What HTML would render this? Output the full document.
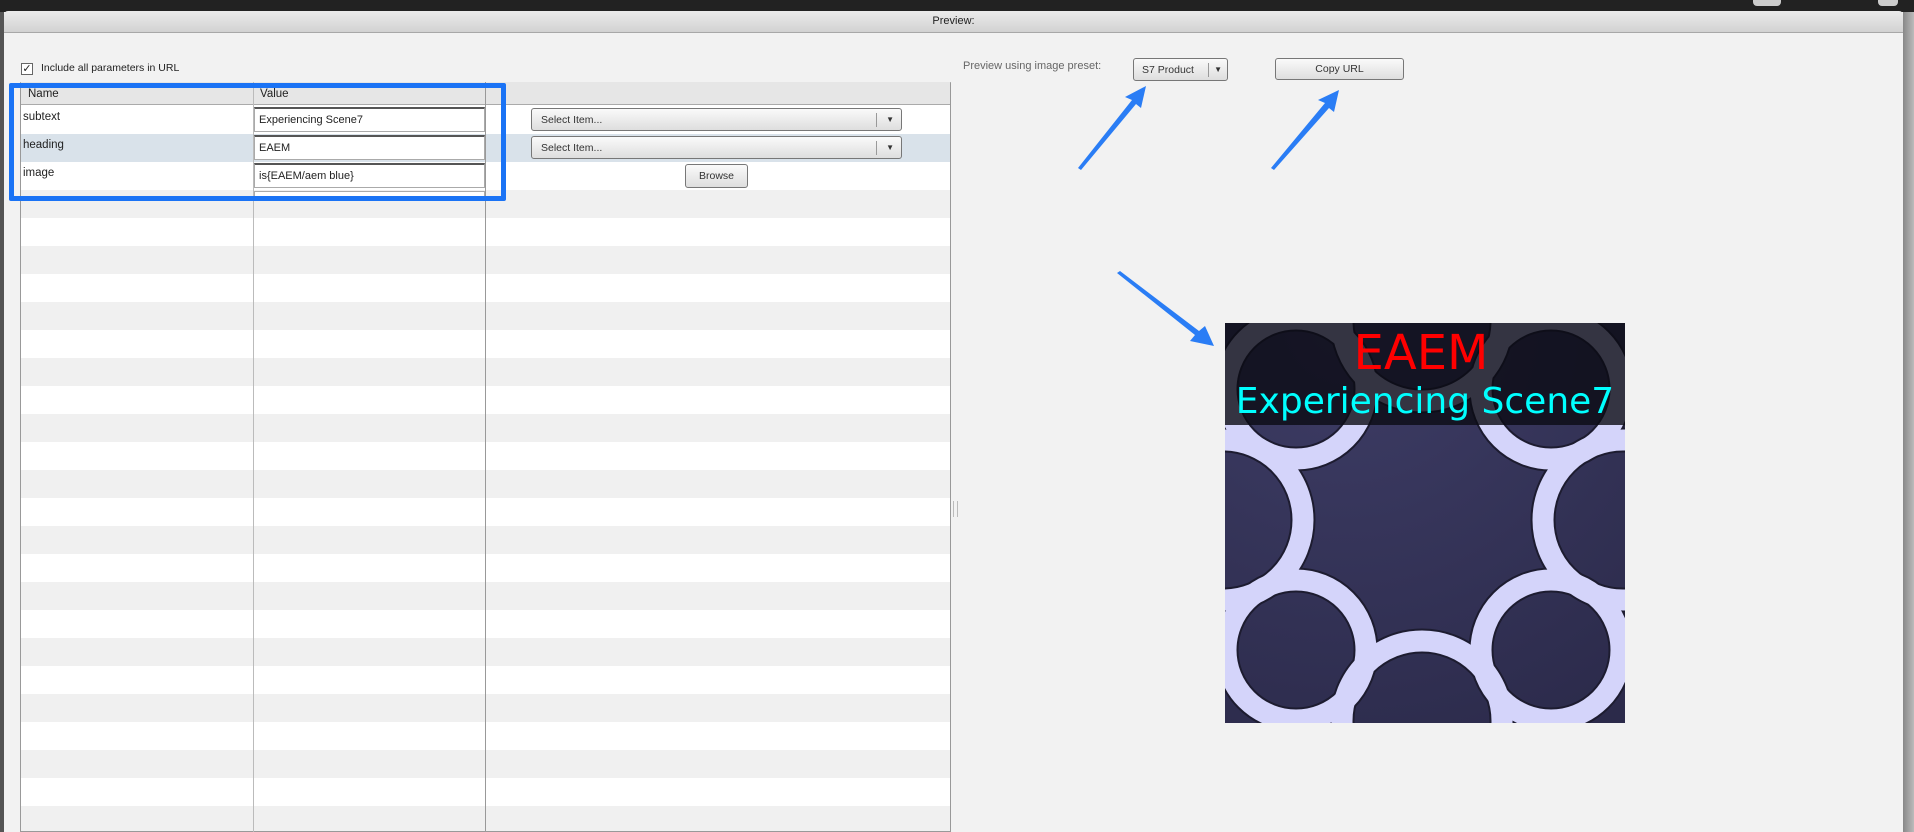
<!DOCTYPE html>
<html><head><style>
*{margin:0;padding:0;box-sizing:border-box}
body{width:1914px;height:832px;overflow:hidden;background:#f2f2f2;font-family:"Liberation Sans",sans-serif;font-size:11px;color:#222;position:relative}
.abs{position:absolute}
.btn{position:absolute;border:1px solid #777;border-radius:3px;background:linear-gradient(#fafafa,#dedede);font-size:10.5px;color:#333;display:flex;align-items:center}
.inp{position:absolute;background:#fff;border:1px solid #aaa;border-top:2px solid #555;padding-left:4px;font-size:11px;display:flex;align-items:center}
</style></head><body>
<div class="abs" style="left:0;top:0;width:1914px;height:12px;background:#222"></div>
<div class="abs" style="left:1753px;top:0;width:28px;height:6px;background:#ccc;border-radius:0 0 4px 4px"></div>
<div class="abs" style="left:1878px;top:0;width:20px;height:6px;background:#ccc;border-radius:0 0 4px 4px"></div>
<div class="abs" style="left:0;top:12px;width:4px;height:820px;background:#555"></div>
<div class="abs" style="left:1903px;top:12px;width:11px;height:820px;background:linear-gradient(90deg,#888,#bbb)"></div>
<div class="abs" style="left:4px;top:11px;width:1899px;height:22px;background:linear-gradient(#ebebeb,#d2d2d2);border-bottom:1px solid #a8a8a8;border-radius:4px 4px 0 0;text-align:center;line-height:21px;font-size:11px">Preview:</div>
<div class="abs" style="left:21px;top:63px;width:12px;height:12px;border:1px solid #666;background:#fff;font-size:11px;line-height:10px;text-align:center">✓</div>
<div class="abs" style="left:41px;top:62px;font-size:10.5px">Include all parameters in URL</div>
<div class="abs" style="left:20px;top:82px;width:931px;height:750px;border:1px solid #999;border-top:1px solid #bbb;background:repeating-linear-gradient(#fff 0 28px,#f0f0f0 28px 56px);background-position:0 23px"></div>
<div class="abs" style="left:21px;top:82px;width:929px;height:23px;background:#e6e6e6;border-bottom:1px solid #aaa"></div>
<div class="abs" style="left:21px;top:134px;width:929px;height:28px;background:#d9e2ea"></div>
<div class="abs" style="left:253px;top:82px;width:1px;height:750px;background:#bbb"></div>
<div class="abs" style="left:485px;top:82px;width:1px;height:750px;background:#999"></div>
<div class="abs" style="left:28px;top:88px;font-size:11.5px">Name</div>
<div class="abs" style="left:260px;top:88px;font-size:11.5px">Value</div>
<div class="abs" style="left:23px;top:111px;font-size:11.5px">subtext</div>
<div class="abs" style="left:23px;top:139px;font-size:11.5px">heading</div>
<div class="abs" style="left:23px;top:167px;font-size:11.5px">image</div>
<div class="inp" style="left:254px;top:107px;width:231px;height:25px">Experiencing Scene7</div>
<div class="inp" style="left:254px;top:135px;width:231px;height:25px">EAEM</div>
<div class="inp" style="left:254px;top:163px;width:231px;height:25px">is{EAEM/aem blue}</div>
<div class="inp" style="left:254px;top:191px;width:231px;height:6px;border-bottom:none;border-top:1px solid #aaa"></div>
<div class="btn" style="left:531px;top:108px;width:371px;height:23px;padding-left:9px">Select Item...<span style="position:absolute;right:24px;top:4px;height:14px;border-left:1px solid #999"></span><span style="position:absolute;right:7px;font-size:8px">▼</span></div>
<div class="btn" style="left:531px;top:136px;width:371px;height:23px;padding-left:9px">Select Item...<span style="position:absolute;right:24px;top:4px;height:14px;border-left:1px solid #999"></span><span style="position:absolute;right:7px;font-size:8px">▼</span></div>
<div class="btn" style="left:685px;top:164px;width:63px;height:24px;justify-content:center">Browse</div>
<div class="abs" style="left:9px;top:83px;width:497px;height:118px;border:5px solid #1a73f5;border-radius:2px"></div>
<div class="abs" style="left:953px;top:501px;width:5px;height:16px;border-left:1px solid #bbb;border-right:1px solid #bbb"></div>
<div class="abs" style="left:963px;top:60px;font-size:11px;color:#666">Preview using image preset:</div>
<div class="btn" style="left:1133px;top:58px;width:95px;height:23px;padding-left:8px">S7 Product<span style="position:absolute;right:18px;top:4px;height:14px;border-left:1px solid #999"></span><span style="position:absolute;right:5px;font-size:8px">▼</span></div>
<div class="btn" style="left:1275px;top:58px;width:129px;height:22px;justify-content:center">Copy URL</div>
<svg class="abs" style="left:0;top:0" width="1914" height="832">
<g fill="#2a7df5">
<polygon points="1078,168 1132,100 1125,97 1146,86 1141,108 1136,104 1081,170"/>
<polygon points="1271,168 1325,103 1318,100 1339,90 1334,112 1329,108 1274,170"/>
<polygon points="1117,273 1195,335 1190,341 1214,346 1205,326 1199,331 1120,271"/>
</g>
</svg>
<svg class="abs" style="left:1225px;top:323px" width="400" height="400" viewBox="0 0 400 400">
<defs><radialGradient id="g" cx="0.3" cy="0" r="1.2"><stop offset="0" stop-color="#3e3d66"/><stop offset="1" stop-color="#2b2a4a"/></radialGradient><clipPath id="c"><rect width="400" height="400"/></clipPath></defs>
<rect width="400" height="400" fill="url(#g)"/>
<g clip-path="url(#c)" fill="none" stroke="#1d1c30" stroke-width="25">
<circle cx="197" cy="-2" r="80"/><circle cx="326" cy="66" r="70"/><circle cx="398" cy="197" r="80"/><circle cx="326" cy="327" r="70"/><circle cx="197" cy="398" r="80"/><circle cx="71" cy="327" r="70"/><circle cx="-2" cy="197" r="80"/><circle cx="71" cy="66" r="70"/>
</g>
<g clip-path="url(#c)" fill="none" stroke="#d4d4fa" stroke-width="21">
<circle cx="197" cy="-2" r="80"/><circle cx="326" cy="66" r="70"/><circle cx="398" cy="197" r="80"/><circle cx="326" cy="327" r="70"/><circle cx="197" cy="398" r="80"/><circle cx="71" cy="327" r="70"/><circle cx="-2" cy="197" r="80"/><circle cx="71" cy="66" r="70"/>
</g>
<rect width="400" height="102" fill="#0b0b14" fill-opacity="0.8"/>
<text x="196" y="46" text-anchor="middle" fill="#ff0000" font-family="DejaVu Sans,sans-serif" font-size="48">EAEM</text>
<text x="200" y="90" text-anchor="middle" fill="#00ffff" font-family="DejaVu Sans,sans-serif" font-size="36">Experiencing Scene7</text>
</svg>
</body></html>
